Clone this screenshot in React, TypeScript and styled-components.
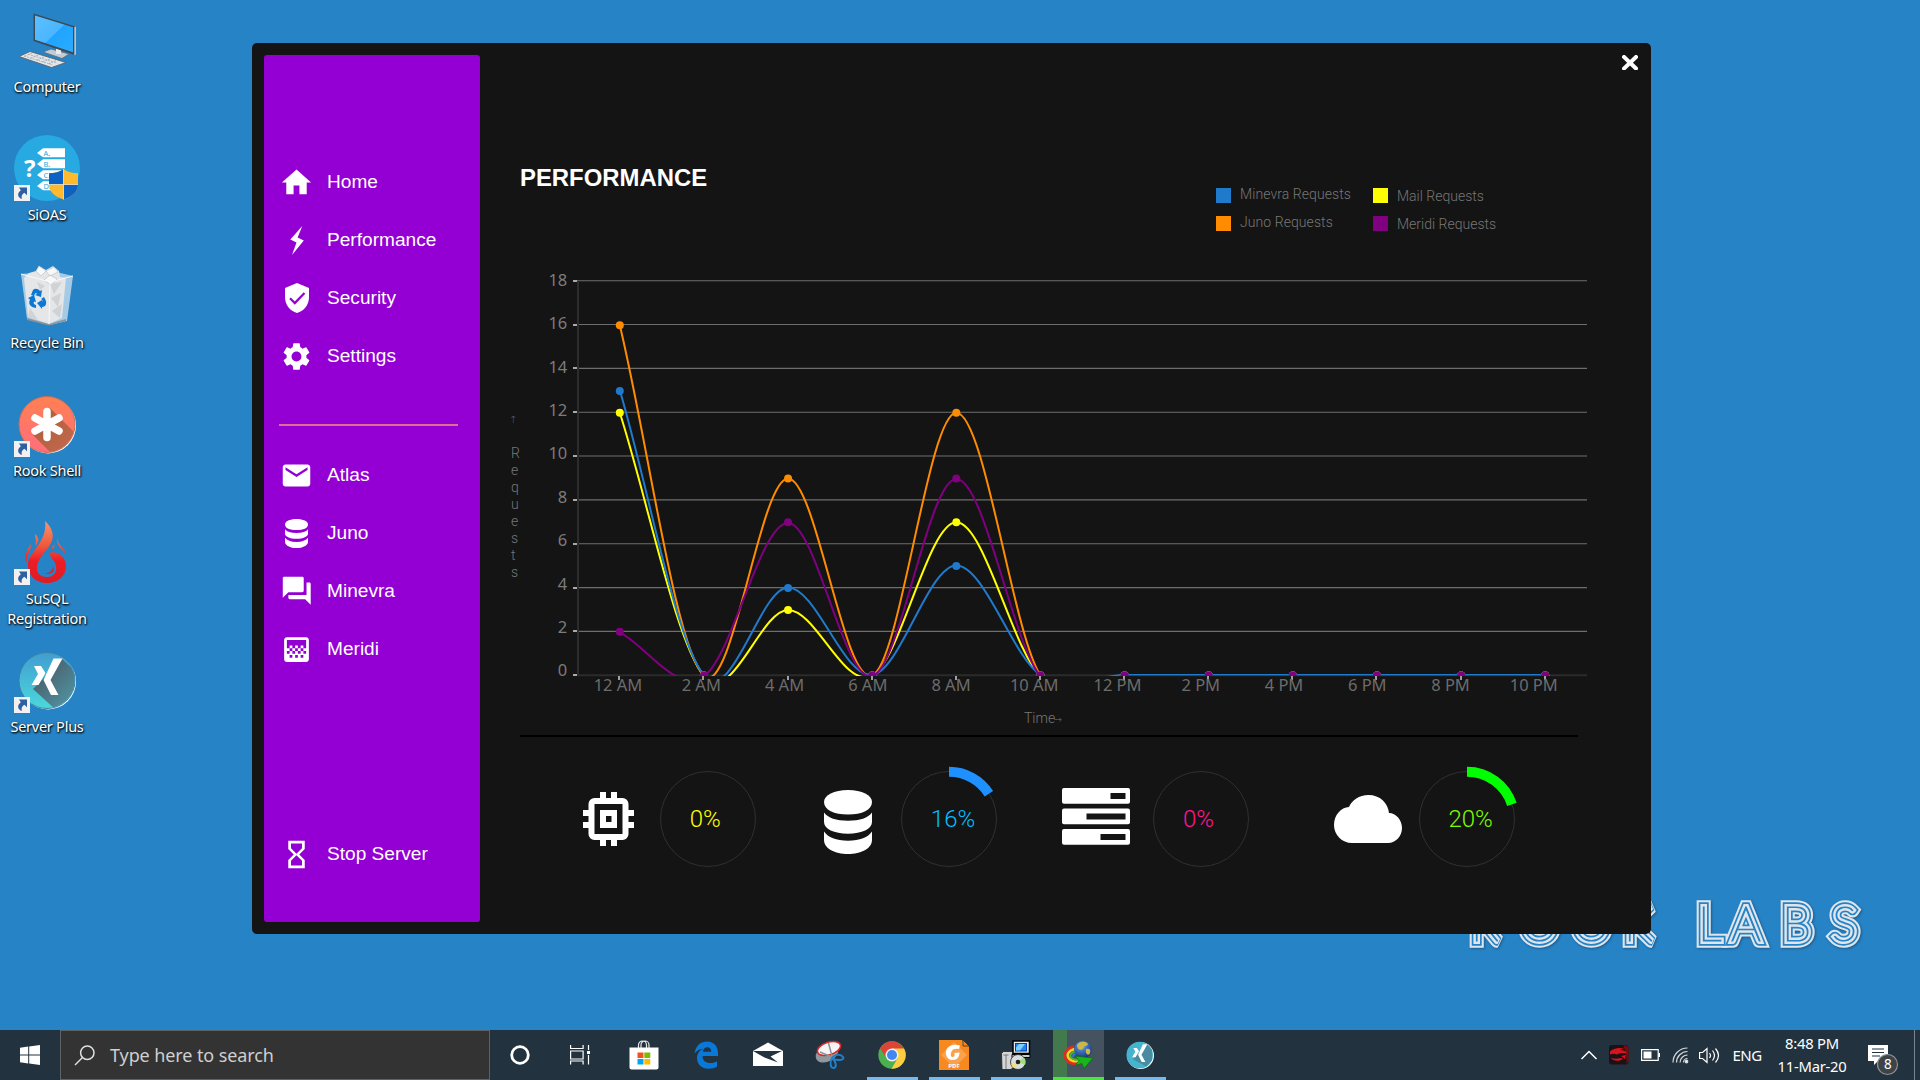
import React from "react";
import styled, { createGlobalStyle } from "styled-components";
import { MdHome, MdSettings, MdEmail, MdForum, MdGradient, MdHourglassEmpty } from "react-icons/md";

const UI = `"Noto Sans", "Open Sans", sans-serif`;
const ARIAL = `"Liberation Sans", Arial, sans-serif`;
const ROBOTO = `Roboto, "Noto Sans", sans-serif`;
const DESKTOP = "#2683c6";

const GlobalStyle = createGlobalStyle`
  * { box-sizing: border-box; }
  html, body { margin: 0; padding: 0; }
  body { background: ${DESKTOP}; overflow: hidden; }
  svg { display: block; flex: none; }
`;

const Desktop = styled.div`
  position: relative;
  display: flex;
  flex-direction: column;
  width: 1920px;
  height: 1080px;
  background: ${DESKTOP};
  overflow: hidden;
  font-family: ${UI};
`;

const Workspace = styled.div`
  flex: 1;
  display: flex;
`;

/* ---------- desktop shortcuts ---------- */

const Shortcuts = styled.div`
  display: flex;
  flex-direction: column;
  width: 94px;
`;

const Shortcut = styled.div`
  height: 128px;
  display: flex;
  flex-direction: column;
  align-items: center;
`;

const ShortcutLabel = styled.span`
  width: 94px;
  margin-top: -1px;
  font-size: 14.5px;
  line-height: 20px;
  letter-spacing: -0.25px;
  text-align: center;
  color: #fff;
  text-shadow: 1px 1px 2px #000, 0 1px 2px rgba(0, 0, 0, 0.7);
`;

const Arrow = () => (
  <g transform="translate(14 57)">
    <rect width="16" height="16" fill="#f1f1f1" />
    <path d="M5 2.5h8v7.7l-2.6-2.4C7.8 9.5 7 11.400 8 14 4.500 13 2 9 6.800 5.200Z" fill="#2f5fa3" />
  </g>
);

const ComputerArt = () => (
  <svg width="94" height="77" viewBox="0 0 94 77">
    <defs>
      <linearGradient id="scr" x1="0" y1="0" x2="1" y2="1">
        <stop offset="0" stopColor="#5cc0ff" />
        <stop offset=".5" stopColor="#4ab6ff" />
        <stop offset=".52" stopColor="#20a4ff" />
        <stop offset="1" stopColor="#2bacff" />
      </linearGradient>
    </defs>
    <path d="M43 52l8-3 18 5-7 4.500Z" fill="#c4ccd3" stroke="#5f6a73" strokeWidth=".8" />
    <path d="M56 48l5 2v4h-5Z" fill="#e8ecef" />
    <path d="M33.500 13.500l42 13-1 28.500-41-14Z" fill="#3c4a55" />
    <path d="M74.300 27l1.700-.4v27.900l-1.700.7Z" fill="#b9c2c9" />
    <path d="M35 15.500l38 11.800v25L35 39.800Z" fill="url(#scr)" />
    <path d="M19 56.500l11-5 36 11-14.500 5Z" fill="#e3e6e9" stroke="#59636b" strokeWidth=".9" />
    <path d="M24 56l29 9M28 54.200l29 8.800M32 53l-8 3.500M38 55l-8 3.500M44 57l-8 3.500M50 58.800l-8 3.500M56 60.600l-8 3.500" stroke="#a4acb3" strokeWidth=".9" strokeDasharray="2 1" />
  </svg>
);

const AnswersArt = () => (
  <svg width="94" height="77" viewBox="0 0 94 77">
    <circle cx="47" cy="40" r="33" fill="#27a9e1" />
    {["A.", "B.", "C.", "D."].map((t, i) => (
      <g key={t} transform={`translate(37 ${20.300 + i * 11})`}>
        <path d="M0 4.700L6 0h22v9H6Z" fill="#fff" />
        <text x="6.500" y="7.600" fontSize="7.500" fontFamily={UI} fill="#27a9e1">{t}</text>
      </g>
    ))}
    <text x="24" y="49" fontSize="24" fontWeight="700" fontFamily={UI} fill="#fff">?</text>
    <path d="M63.500 41c4 3 9 4.300 14.500 4.300V56c0 8-6 12.500-14.500 15.500C55 68.500 49 64 49 56V45.300C54.500 45.300 59.500 44 63.500 41Z" fill="#ffb92e" />
    <path d="M63.500 41v15.500H49V45.300C54.500 45.300 59.500 44 63.500 41ZM63.500 56.500H78C78 64 72 68.500 63.500 71.500Z" fill="#0b62c2" />
    <path d="M63.500 41v30.500M49 56.500h29" stroke="#f7e6bd" strokeWidth=".8" />
    <Arrow />
  </svg>
);

const BinArt = () => (
  <svg width="94" height="77" viewBox="0 0 94 77">
    <path d="M21 18l31-3 21 5-6 45-17 4-23-6Z" fill="#c5dcec" opacity=".8" />
    <path d="M24 22l5-5 7-2 3-5 7 4 7-4 6 5 1 6 6 1-4 40-13 6-21-7Z" fill="#e4e6e8" />
    <path d="M27 62l22 6 17-5v2l-17 4.500L27 64Z" fill="#8d9399" />
    <path d="M36 15l3-5 7 5-5 5ZM46 15l8-4 4 5-8 4ZM44 24l6-5 7 4-6 6Z" fill="#f8f8f8" stroke="#b7bcc0" strokeWidth=".6" />
    <path d="M50 28l12-2-8 12ZM51 42l10-5-3 14ZM52 55l10-7-2 14ZM30 52l8 12-10-3ZM45 30l-8-4 3 8Z" fill="#cfd3d6" />
    <path d="M50 26l-1 42M21 18l29 8 23-6" stroke="#f7fafc" strokeWidth="1" fill="none" />
    <g fill="#0a78d4">
      <path d="M31 39l2-5c2-2 5-1.500 7 1l2-1-1 7-6-2 2-1c-1-2-2-1-3 2Z" />
      <path d="M28 42l6-3 2 7-2-.5c-1 2 0 3 2 3.500v3c-6-1-8-4-6-8.500Z" />
      <path d="M37 47l5-3v2c1-1 0-3-1-3l3-2c4 6 2 10-2 10v2Z" />
    </g>
  </svg>
);

const DiscArt = ({ kind }: { kind: "star" | "x" }) => (
  <svg width="94" height="77" viewBox="0 0 94 77">
    <defs>
      <linearGradient id={`disc-${kind}`} x1="0" y1="0" x2="0" y2="1">
        <stop offset="0" stopColor={kind === "star" ? "#ff8052" : "#419dd0"} />
        <stop offset="1" stopColor={kind === "star" ? "#ff6e7c" : "#4bd8dc"} />
      </linearGradient>
      <linearGradient id={`shade-${kind}`} x1="0" y1="0" x2="1" y2="1">
        <stop offset=".2" stopColor={kind === "star" ? "#b2603f" : "#4b626f"} />
        <stop offset="1" stopColor={kind === "star" ? "#c96c53" : "#52b2c0"} />
      </linearGradient>
      <clipPath id={`clip-${kind}`}><circle cx="47" cy="40.500" r="27.500" /></clipPath>
    </defs>
    <circle cx="48" cy="41.500" r="28" fill="#fff" />
    <circle cx="47" cy="40.500" r="28" fill={`url(#disc-${kind})`} stroke={kind === "star" ? "#ca6d50" : "#3a83a6"} strokeWidth="1" />
    <g clipPath={`url(#clip-${kind})`}>
      {kind === "star" ? (
        <>
          <path d="M50 24l34 34-22 22-29-29 14-10Z" fill="url(#shade-star)" />
          <path d="M47 27.500v26M35 34l24 13M59 34L35 47" stroke="#fff" strokeWidth="7.500" strokeLinecap="round" />
        </>
      ) : (
        <>
          <path d="M61 18l30 28-24 34-34-31 10-10Z" fill="url(#shade-x)" />
          <path d="M53.500 18.500h9L50.500 40l8 15h-7.500L43.500 40ZM34 26h7l4.500 7L38.500 45h-7l6.500-11Z" fill="#fff" />
        </>
      )}
    </g>
    <Arrow />
  </svg>
);

const FlameArt = () => (
  <svg width="94" height="77" viewBox="0 0 94 77">
    <defs>
      <linearGradient id="flame" x1="0" y1="0" x2="0" y2="1">
        <stop offset="0" stopColor="#f8946b" />
        <stop offset=".4" stopColor="#f0583c" />
        <stop offset=".65" stopColor="#ed1c24" />
        <stop offset="1" stopColor="#e01c24" />
      </linearGradient>
    </defs>
    <path
      d="M45 9c7 6 10 15 6 22-4 8-14 15-14 25 0 6 4 9 10 9 7 0 10-5 9-11-1-6-5-7-7-13 8-3 17 4 17 13 0 10-8 17-19 17-12 0-19-8-19-18C28 40 48 30 45 9ZM44 61c5 1 9-2 9-7 3 5-2 10-9 7ZM57 26c1 8 8 9 9 17-3-6-10-8-9-17ZM35 22c4 3 5 8 0 12 2-5 0-7 0-12ZM31 32c0 8-5 10-4 19-3-7 0-14 4-19ZM52 37c0-3 2-3 2-5 1 3 0 5-2 5Z"
      fill="url(#flame)"
    />
    <Arrow />
  </svg>
);

/* ---------- wallpaper wordmark ---------- */

const Wordmark = styled.svg`
  position: absolute;
  left: 1450px;
  top: 880px;
  font-family: Lato, Roboto, sans-serif;
  font-weight: 100;
  font-size: 47px;
  stroke-linejoin: miter;
  stroke-miterlimit: 1.8;
  filter: drop-shadow(1px 1px 1px rgba(20, 50, 80, 0.5));
`;

const WallpaperName = () => (
  <Wordmark width="440" height="90" viewBox="0 0 440 90">
    <defs>
      <text id="rook-labs" y="60.500" x="21 71 123 174 220 248 281 332 382">ROOK LABS</text>
    </defs>
    <use href="#rook-labs" fill="none" stroke="#dfe5ea" strokeWidth="13.500" />
    <use href="#rook-labs" fill="none" stroke={DESKTOP} strokeWidth="9.400" />
    <use href="#rook-labs" fill="none" stroke="#dfe5ea" strokeWidth="6" />
    <use href="#rook-labs" fill={DESKTOP} stroke={DESKTOP} strokeWidth="1.200" />
  </Wordmark>
);

/* ---------- application window ---------- */

const Window = styled.main`
  position: absolute;
  left: 252px;
  top: 43px;
  width: 1399px;
  height: 891px;
  padding: 12px;
  display: flex;
  background: #141414;
  border-radius: 5px;
`;

const Sidebar = styled.nav`
  width: 216px;
  padding: 98px 22px 0 15px;
  display: flex;
  flex-direction: column;
  background: #9400d3;
  border-radius: 3px;
`;

const NavItem = styled.div<{ $gap?: number }>`
  height: 58px;
  margin-top: ${(p) => p.$gap ?? 0}px;
  display: flex;
  align-items: center;
  gap: 12.5px;
  flex: none;
  font: 19.1px/22px ${ARIAL};
  color: #fff;
`;

const NavIcon = styled.span`
  width: 36px;
  height: 36px;
  margin-left: -0.5px;
  display: flex;
  align-items: center;
  justify-content: center;
  color: #fff;
`;

const NavRule = styled.div`
  height: 2px;
  flex: none;
  margin: 39px 0 20px;
  background: #db7093;
`;

const Panel = styled.section`
  flex: 1;
  display: flex;
  flex-direction: column;
`;

const TitleBar = styled.div`
  height: 15px;
  display: flex;
  justify-content: flex-end;
  padding-right: 1px;
`;

const Heading = styled.div`
  height: 190px;
  display: flex;
  padding-left: 40px;
`;

const Title = styled.h1`
  width: 696px;
  margin: 94px 0 0;
  font: bold 23.9px/28px ${ARIAL};
  color: #fff;
`;

const Legend = styled.div`
  margin-top: 118px;
  height: 43px;
  display: grid;
  grid-template-columns: 157px 157px;
  grid-template-rows: 15px 15px;
  row-gap: 13px;
`;

const LegendItem = styled.div<{ $color: string; $drop: number }>`
  display: flex;
  gap: 9px;
  font: 300 14px/15px ${ROBOTO};
  color: #777;
  white-space: nowrap;

  &::before {
    content: "";
    width: 15px;
    height: 15px;
    background: ${(p) => p.$color};
  }

  span {
    margin-top: ${(p) => p.$drop}px;
    height: 15px;
    letter-spacing: ${(p) => (p.$drop < 0 ? 0.07 : 0)}px;
  }
`;

const ChartBox = styled.div`
  height: 475px;
  padding-left: 20px;
`;

const Rule = styled.div`
  width: 1058px;
  height: 2px;
  margin-left: 40px;
  background: #000;
`;

const Gauges = styled.div`
  display: flex;
  align-items: center;
  height: 164px;
  padding-left: 103px;
`;

const Gauge = styled.div<{ $lead: number }>`
  display: flex;
  align-items: center;
  margin-left: ${(p) => p.$lead}px;
`;

const GaugeIcon = styled.div<{ $slot: number; $shift: number }>`
  width: ${(p) => p.$slot}px;
  padding-top: ${(p) => Math.max(0, p.$shift * 2)}px;
  padding-bottom: ${(p) => Math.max(0, -p.$shift * 2)}px;
`;

/* ---------- chart ---------- */

type Pt = { x: number; y: number };
const X0 = 619.8;
const XSTEP = 84.13;
const Y0 = 675.6;
const UNIT = 21.9;

const HOURS = ["12 AM", "2 AM", "4 AM", "6 AM", "8 AM", "10 AM", "12 PM", "2 PM", "4 PM", "6 PM", "8 PM", "10 PM"];
const tail = [0, 0, 0, 0, 0, 0];
const SERIES = [
  { color: "#ffff00", dy: 0, values: [12, 0, 3, 0, 7, 0, ...tail] },
  { color: "#ff8c00", dy: 0, values: [16, 0, 9, 0, 12, 0, ...tail] },
  { color: "#1f7acc", dy: -0.6, values: [13, 0, 4, 0, 5, 0, ...tail] },
  { color: "#800080", dy: 0.6, values: [2, 0, 7, 0, 9, 0, ...tail] },
];

const toPoints = (values: number[], dy: number): Pt[] =>
  values.map((v, i) => ({ x: X0 + i * XSTEP, y: Y0 - v * UNIT + dy }));

/* Catmull-Rom spline; the end points take the slope of their only segment. */
function spline(p: Pt[]) {
  const slope = (i: number) => {
    if (i === 0) return p[1].y - p[0].y;
    if (i === p.length - 1) return p[i].y - p[i - 1].y;
    return (p[i + 1].y - p[i - 1].y) / 2;
  };
  let d = `M${p[0].x} ${p[0].y}`;
  for (let i = 0; i < p.length - 1; i++) {
    const b = p[i];
    const c = p[i + 1];
    const h = (c.x - b.x) / 3;
    d += `C${b.x + h} ${b.y + slope(i) / 3} ${c.x - h} ${c.y - slope(i + 1) / 3} ${c.x} ${c.y}`;
  }
  return d;
}

const Chart = () => (
  <svg width="1100" height="475" viewBox="500 260 1100 475">
    <defs>
      <clipPath id="plot"><rect x="578" y="270" width="1010" height="406" /></clipPath>
    </defs>
    {[18, 16, 14, 12, 10, 8, 6, 4, 2, 0].map((v, i) => {
      const y = 280.7 + i * 43.84;
      return (
        <g key={v}>
          <path d={`M578 ${y}H1587`} stroke={v ? "#6e6e6e" : "#2b2b2b"} strokeWidth={v ? 1.1 : 2} />
          <path d={`M573 ${Math.round(y)}h4.500`} stroke="#d0d0d0" strokeWidth="1.600" />
          <text x="567.300" y={285.7 + i * 43.4} textAnchor="end" fontFamily={UI} fontSize="16.500" fill="#7c7c7c">{v}</text>
        </g>
      );
    })}
    <path d="M578 281V676" stroke="#2c2c2c" strokeWidth="2" />
    <g clipPath="url(#plot)">
      {SERIES.map((s) => (
        <g key={s.color}>
          <path d={spline(toPoints(s.values, s.dy))} fill="none" stroke={s.color} strokeWidth="2" />
          {toPoints(s.values, 0).map((q, i) => <circle key={i} cx={q.x} cy={q.y} r="4" fill={s.color} />)}
        </g>
      ))}
    </g>
    {HOURS.map((h, i) => (
      <g key={h}>
        <path d={`M${Math.round(X0 - 0.5 + i * XSTEP)} 676v4`} stroke="#cfcfcf" strokeWidth="1.500" />
        <text x={618 + i * 83.25} y="691.200" textAnchor="middle" fontFamily={UI} fontSize="16.500" fill="#6c6c6c">{h}</text>
      </g>
    ))}
    <g fontFamily={ROBOTO} fontWeight="300" fontSize="14" fill="#777">
      <text x="509" y="423" fontFamily='"DejaVu Sans"' fontSize="10" fill="#666">↑</text>
      {["R", "e", "q", "u", "e", "s", "t", "s"].map((c, i) => (
        <text key={i} x="511" y={458.400 + i * 17}>{c}</text>
      ))}
      <text x="1024" y="723">Time</text>
      <text x="1053.500" y="722.500" fontFamily='"DejaVu Sans"' fontSize="10" fill="#777">→</text>
    </g>
  </svg>
);

/* ---------- glyphs ---------- */

const Bolt = () => (
  <svg width="14" height="29" viewBox="0 0 14 29"><path d="M12.300 0L.3 13.500l6.200 3L2 29l11.800-14.500-6.200-3Z" fill="#fff" /></svg>
);

const Shield = () => (
  <svg width="24" height="30" viewBox="0 0 24 30">
    <path d="M12 0l12 5v9c0 8-5 14-12 16C5 28 0 22 0 14V5Z" fill="#fff" />
    <path d="M5 15.300l4.800 4.800L19.500 10" fill="none" stroke="#9400d3" strokeWidth="2.200" />
  </svg>
);

const Cylinder = ({ w, h }: { w: number; h: number }) => (
  <svg width={w} height={h} viewBox="0 0 48 64" preserveAspectRatio="none" fill="#fff">
    <path d="M0 12C0 5 10 0 24 0s24 5 24 12c0 8-10 12.500-24 12.500S0 20 0 12Z" />
    <path d="M0 22.500c4 5.500 12 8.200 24 8.200s20-2.700 24-8.200V32c0 7-10 11.700-24 11.700S0 39 0 32Z" />
    <path d="M0 41.500c4 6 12 9.200 24 9.200s20-3.200 24-9.200V50c0 8.500-11 14-24 14S0 58.500 0 50Z" />
  </svg>
);

const Chip = () => (
  <svg width="51" height="54" viewBox="0 0 51 54" fill="#fff">
    <path d="M17 0h6v7h-6ZM28 0h6v7h-6ZM17 47h6v7h-6ZM28 47h6v7h-6ZM0 18h7v6H0ZM0 30h7v6H0ZM44 18h7v6h-7ZM44 30h7v6h-7Z" />
    <path fillRule="evenodd" d="M11.500 6h28a6 6 0 0 1 6 6v30a6 6 0 0 1-6 6h-28a6 6 0 0 1-6-6V12a6 6 0 0 1 6-6ZM11.500 12v30h28V12Z" />
    <path fillRule="evenodd" d="M17 18h17v18H17ZM23 24v6h5.500v-6Z" />
  </svg>
);

const Racks = () => (
  <svg width="68" height="57" viewBox="0 0 68 57">
    {[15, 39, 25].map((w, i) => (
      <g key={w} transform={`translate(0 ${i * 20.500})`}>
        <rect width="68" height="15.800" rx="2" fill="#fff" />
        <rect x={63.500 - w} y="5" width={w} height="6" fill="#141414" />
      </g>
    ))}
  </svg>
);

const Cloud = () => (
  <svg width="68" height="48" viewBox="0 0 68 48" fill="#fff">
    <path d="M18 48C8 48 0 40 0 30c0-10 7-17.500 15-18C18 5 25 0 34.500 0 46 0 54 8 55 18c7 0 13 7 13 15 0 8-6 15-14 15Z" />
  </svg>
);

const Ring = ({ pct, arc, color, dx }: { pct: number; arc?: string; color: string; dx: number }) => {
  const a = (pct / 100) * Math.PI * 2;
  const r = 47.2;
  return (
    <svg width="106" height="106" viewBox="-53 -53 106 106">
      <circle r="47.500" fill="none" stroke="#303030" />
      {arc && <path d={`M0 ${-r}A${r} ${r} 0 0 1 ${r * Math.sin(a)} ${-r * Math.cos(a)}`} fill="none" stroke={arc} strokeWidth="10" />}
      <text x={dx} y="7.800" textAnchor="middle" fontFamily={ROBOTO} fontWeight="300" fontSize="24" fill={color}>{pct}%</text>
    </svg>
  );
};

/* ---------- taskbar ---------- */

const Taskbar = styled.footer`
  height: 50px;
  flex: none;
  display: flex;
  background: #22323f;
  color: #fff;
`;

const StartButton = styled.div`
  width: 60px;
  display: flex;
  align-items: center;
  justify-content: center;
  padding-right: 1px;
`;

const Search = styled.div`
  width: 430px;
  display: flex;
  align-items: center;
  gap: 15px;
  padding-left: 13px;
  background: #333;
  border: 1px solid #5c6266;
  font-size: 18px;
  letter-spacing: -0.1px;
  color: #cfcfcf;
`;

const TaskSlot = styled.div<{ $line?: string; $active?: boolean }>`
  width: 51px;
  margin: 0 6px 0 5px;
  padding-right: 1px;
  display: flex;
  align-items: center;
  justify-content: center;
  border-bottom: 3px solid transparent;
  border-top: 3px solid transparent;
  background: ${(p) => (p.$active ? "linear-gradient(90deg, #427a4d 14px, #45525f 14px) border-box" : "none")};
  border-bottom-color: ${(p) => p.$line ?? "transparent"};
`;

const Tray = styled.div`
  margin-left: auto;
  display: flex;
  align-items: center;
  font-size: 15px;
`;

const TrayItem = styled.div<{ $w: number; $top?: number }>`
  width: ${(p) => p.$w}px;
  padding-top: ${(p) => p.$top ?? 0}px;
  display: flex;
  justify-content: center;
  letter-spacing: -0.5px;
`;

const Clock = styled.div`
  width: 84px;
  display: flex;
  flex-direction: column;
  align-items: center;
  line-height: 23px;
  font-size: 14.800px;
  letter-spacing: -0.25px;
`;

const ShowDesktop = styled.div`
  width: 6px;
  height: 50px;
  border-left: 1px solid #7b858d;
`;

const line = "#76b9ed";

const taskIcons: { key: string; line?: string; active?: boolean; art: React.ReactNode }[] = [
  {
    key: "cortana",
    art: <svg width="22" height="22" viewBox="0 0 22 22"><circle cx="11" cy="11" r="8.300" fill="none" stroke="#fff" strokeWidth="2.800" /></svg>,
  },
  {
    key: "taskview",
    art: (
      <svg width="24" height="20" viewBox="2 0 24 20" fill="none" stroke="#fff" strokeWidth="1.200">
        <path d="M2.600 0v3.500h12.500V0M2.600 19.500V16h12.500v3.500M2.600 6h12.500v8H2.600ZM20.500 0v5M20.500 10v9.500" />
        <rect x="19" y="6" width="3" height="3" fill="#fff" stroke="none" />
      </svg>
    ),
  },
  {
    key: "store",
    art: (
      <svg width="30" height="30" viewBox="0 0 30 30">
        <path d="M9.500 8V5a4 4 0 0 1 8 0v3M12 8V5a4 4 0 0 1 8 0v3" fill="none" stroke="#e8e8e8" strokeWidth="1.200" />
        <path d="M.5 7.500h29v20a2 2 0 0 1-2 2h-25a2 2 0 0 1-2-2Z" fill="#fff" />
        <path d="M8.500 12.500h6v5.500h-6Z" fill="#f25022" /><path d="M15.300 12.500h6v5.500h-6Z" fill="#7fba00" />
        <path d="M8.500 19h6v5.500h-6Z" fill="#00a4ef" /><path d="M15.300 19h6v5.500h-6Z" fill="#ffb900" />
      </svg>
    ),
  },
  {
    key: "edge",
    art: (
      <svg width="25" height="28" viewBox="0 0 25 28">
        <path d="M.5 12.500C2 4 7 .5 13 .5c7 0 11 5 11 11.500V15H8.500c.3 5 3.500 7 7.500 7 3 0 5.300-.8 7-1.800v5.600c-2 1.200-5 1.900-8.500 1.900C7.500 27.700 3 23 3 17.200c0-4.400 2.500-7.700 6-9.400C5.500 8.200 2.500 9.800.5 12.500ZM8.800 10.800h8.500C17.300 8 15.700 6.300 13.300 6.300c-2.300 0-4 1.700-4.500 4.500Z" fill="#0a78d7" />
      </svg>
    ),
  },
  {
    key: "mail",
    art: (
      <svg width="30" height="26" viewBox="0 0 30 26">
        <path d="M0 9L15 .5 30 9v15H0Z" fill="#fff" />
        <path d="M0 9h29L17.500 14.500l7.500 6L11.500 15.500Z" fill="#22323f" />
      </svg>
    ),
  },
  {
    key: "snip",
    art: (
      <svg width="30" height="30" viewBox="0 0 30 30">
        <ellipse cx="12" cy="13.500" rx="12" ry="8" transform="rotate(-28 12 13.500)" fill="#8f989f" />
        <ellipse cx="14" cy="8.500" rx="12" ry="6.300" transform="rotate(-18 14 8.500)" fill="#f5f5f5" stroke="#d8282f" strokeWidth="1.500" />
        <path d="M13.500 3l4 15M5 12l14 6" stroke="#8b9298" strokeWidth="1.500" />
        <path d="M17 18c3-4 9-4 11-1s-4 4-10 2c3 3 4 8 1 9s-5-5-2-10" fill="none" stroke="#1f7fc9" strokeWidth="2" />
      </svg>
    ),
  },
  {
    key: "chrome",
    line,
    art: (
      <svg width="28" height="28" viewBox="-14 -14 28 28">
        <circle r="13.700" fill="#4caf50" />
        <path d="M0 0L-11.860-6.850A13.700 13.700 0 0 1 11.860-6.850Z" fill="#db4437" />
        <path d="M-11.860-6.850L-5.500 3.200 0-6.600H12Z" fill="#db4437" />
        <path d="M0-6.500H12A13.700 13.700 0 0 1-.5 13.700L5.600 3.200Z" fill="#ffcd40" />
        <circle r="6.500" fill="#f1f1f1" /><circle r="5" fill="#4285f4" />
      </svg>
    ),
  },
  {
    key: "pdf",
    line,
    art: (
      <svg width="30" height="30" viewBox="0 0 30 30">
        <path d="M0 0h23l7 6.500V30H0Z" fill="#f7891f" />
        <path d="M24 0l6 6h-6Z" fill="#f7891f" stroke="#22323f" strokeWidth=".8" />
        <path d="M15 2l13 13-13 13L2 15Z" fill="#f9a24d" />
        <path d="M21 5.500C12 3 6 8 7 14c.5 4 3.500 6 7 6 4.500 0 6.500-3.500 6.500-7.500l-5 .5c.5 3-.5 4-2 4-2 0-2-3-1-5.500C13.500 9 17 8.500 20 9Z" fill="#fff" />
        <text x="15" y="27.800" textAnchor="middle" fontSize="6" fontWeight="700" fontFamily={UI} fill="#fff">PDF</text>
      </svg>
    ),
  },
  {
    key: "installer",
    line,
    art: (
      <svg width="30" height="30" viewBox="0 0 30 30">
        <path d="M.5 13.500l2-2H12v16l-2 2H1Z" fill="#d5d5d5" stroke="#222" strokeWidth=".8" />
        <path d="M2.500 15h5M5 15v14" stroke="#777" />
        <path d="M12 1h16.500v12.500H12Z" fill="#e9e9e9" stroke="#000" strokeWidth="1.500" />
        <path d="M14 3h12v8.500H14Z" fill="#0a3fae" /><path d="M15 4h10v6.500H15Z" fill="#1d86f0" /><path d="M18 4h6l-5 6.500h-4v-3Z" fill="#7ccfff" />
        <path d="M11 14.500h18v3H11Z" fill="#c9c9c9" stroke="#000" strokeWidth="1" />
        <circle cx="17" cy="22" r="7.500" fill="#d7dde0" stroke="#222" strokeWidth=".8" />
        <path d="M17 22l6-4.500A7.500 7.500 0 0 1 24 25Z" fill="#9fe07a" /><path d="M17 22l-3 6.500a7 7 0 0 1-4-4Z" fill="#f2e276" />
        <circle cx="17" cy="22" r="2.300" fill="#222" />
      </svg>
    ),
  },
  {
    key: "downloads",
    line: "#4fe340",
    active: true,
    art: (
      <svg width="30" height="30" viewBox="0 0 30 30">
        <defs>
          <radialGradient id="globe" cx=".4" cy=".3" r=".75">
            <stop offset="0" stopColor="#cfe0f5" /><stop offset=".35" stopColor="#4678c8" /><stop offset="1" stopColor="#14306f" />
          </radialGradient>
        </defs>
        <path d="M11 6.500C4 8 0 13 2.500 18c2.500 5 8 6.500 15 5" fill="none" stroke="#e02c20" strokeWidth="2.800" />
        <path d="M11.500 9C6 10.500 3.500 14 5.300 17.500 7.500 21 12 22 17 21" fill="none" stroke="#f6d21e" strokeWidth="2.400" />
        <path d="M12 11.500c-4 1.500-5.500 3.500-4.300 5.500 1.500 2.300 5 3 9.300 2.500" fill="none" stroke="#3fb830" strokeWidth="2" />
        <path d="M13 13.500c-3 1-3.500 2.500-2.500 3.500" fill="none" stroke="#2c7ae0" strokeWidth="1.800" />
        <circle cx="20" cy="9.500" r="8.800" fill="url(#globe)" />
        <path d="M14 5c3-4 9-4 11-1-1 3-4 1-5 4s-6 2-6-3ZM23 9c4-1 5 1 4 4s-5 2-4-4Z" fill="#c9b945" />
        <path d="M12 16l18 2-9 10.500-2-5-7 2 4-5Z" fill="#19b51d" stroke="#0c6a12" strokeWidth=".7" />
      </svg>
    ),
  },
  {
    key: "server",
    line,
    art: (
      <svg width="28" height="28" viewBox="19 12 57 57">
        <circle cx="48.500" cy="41.500" r="27.500" fill="#fff" />
        <circle cx="47" cy="40.500" r="27" fill="#45b4cf" />
        <path d="M61 18l11 13v20L60 64 33 49l10-10Z" fill="#4a8c9f" />
        <path d="M53.500 18.500h9L50.500 40l8 15h-7.500L43.500 40ZM34 26h7l4.500 7L38.500 45h-7l6.500-11Z" fill="#fff" />
      </svg>
    ),
  },
];

const nav = [
  { label: "Home", icon: <MdHome size={35} /> },
  { label: "Performance", icon: <Bolt /> },
  { label: "Security", icon: <Shield /> },
  { label: "Settings", icon: <MdSettings size={33} /> },
];

const services = [
  { label: "Atlas", icon: <MdEmail size={33} /> },
  { label: "Juno", icon: <Cylinder w={23} h={29} /> },
  { label: "Minevra", icon: <MdForum size={33.5} /> },
  { label: "Meridi", icon: <MdGradient size={33} /> },
];

export default function App() {
  return (
    <Desktop>
      <GlobalStyle />
      <Workspace>
        <Shortcuts>
          <Shortcut><ComputerArt /><ShortcutLabel>Computer</ShortcutLabel></Shortcut>
          <Shortcut><AnswersArt /><ShortcutLabel>SiOAS</ShortcutLabel></Shortcut>
          <Shortcut><BinArt /><ShortcutLabel>Recycle Bin</ShortcutLabel></Shortcut>
          <Shortcut><DiscArt kind="star" /><ShortcutLabel>Rook Shell</ShortcutLabel></Shortcut>
          <Shortcut><FlameArt /><ShortcutLabel>SuSQL Registration</ShortcutLabel></Shortcut>
          <Shortcut><DiscArt kind="x" /><ShortcutLabel>Server Plus</ShortcutLabel></Shortcut>
        </Shortcuts>
      </Workspace>
      <WallpaperName />

      <Window>
        <Sidebar>
          {nav.map((n) => <NavItem key={n.label}><NavIcon>{n.icon}</NavIcon>{n.label}</NavItem>)}
          <NavRule />
          {services.map((n) => <NavItem key={n.label}><NavIcon>{n.icon}</NavIcon>{n.label}</NavItem>)}
          <NavItem $gap={147}><NavIcon><MdHourglassEmpty size={33} /></NavIcon>Stop Server</NavItem>
        </Sidebar>
        <Panel>
          <TitleBar>
            <svg width="16" height="15" viewBox="0 0 16 15"><path d="M2 2l12 11.500M14 2L2 13.500" stroke="#fff" strokeWidth="4" strokeLinecap="square" /></svg>
          </TitleBar>
          <Heading>
            <Title>PERFORMANCE</Title>
            <Legend>
              <LegendItem $color="#1f7acc" $drop={-1}><span>Minevra Requests</span></LegendItem>
              <LegendItem $color="#ffff00" $drop={1}><span>Mail Requests</span></LegendItem>
              <LegendItem $color="#ff8c00" $drop={-1}><span>Juno Requests</span></LegendItem>
              <LegendItem $color="#800080" $drop={1}><span>Meridi Requests</span></LegendItem>
            </Legend>
          </Heading>
          <ChartBox><Chart /></ChartBox>
          <Rule />
          <Gauges>
            <Gauge $lead={0}><GaugeIcon $slot={72} $shift={0}><Chip /></GaugeIcon><Ring pct={0} color="#ffff00" dx={-2.7} /></Gauge>
            <Gauge $lead={63}><GaugeIcon $slot={72} $shift={3}><Cylinder w={48} h={64} /></GaugeIcon><Ring pct={16} arc="#1e90ff" color="#00bfff" dx={4} /></Gauge>
            <Gauge $lead={60.4}><GaugeIcon $slot={85.6} $shift={-2.5}><Racks /></GaugeIcon><Ring pct={0} color="#ff1493" dx={-2.5} /></Gauge>
            <Gauge $lead={80.4}><GaugeIcon $slot={79.6} $shift={0}><Cloud /></GaugeIcon><Ring pct={20} arc="#00ff00" color="#7cfc00" dx={3.6} /></Gauge>
          </Gauges>
        </Panel>
      </Window>

      <Taskbar>
        <StartButton>
          <svg width="20" height="20" viewBox="0 0 20 20" fill="#fff"><path d="M0 2.800L8.200 1.600V9.500H0ZM9.200 1.400L20 0v9.500H9.200ZM0 10.500h8.200v7.900L0 17.200ZM9.200 10.500H20V20L9.200 18.600Z" /></svg>
        </StartButton>
        <Search>
          <svg width="21" height="21" viewBox="0 0 21 21" fill="none" stroke="#e0e0e0" strokeWidth="1.500"><circle cx="13.300" cy="7.700" r="6.700" /><path d="M8.500 12.500L1 20" /></svg>
          Type here to search
        </Search>
        {taskIcons.map((t) => <TaskSlot key={t.key} $line={t.line} $active={t.active}>{t.art}</TaskSlot>)}
        <Tray>
          <TrayItem $w={30}>
            <svg width="18" height="10" viewBox="0 0 18 10"><path d="M1.500 9L9 1.500 16.500 9" fill="none" stroke="#fff" strokeWidth="1.500" /></svg>
          </TrayItem>
          <TrayItem $w={30}>
            <svg width="20" height="20" viewBox="0 0 20 20"><rect width="19.500" height="19.500" rx="3" fill="#1c1216" /><path d="M14 .5h3a3 3 0 0 1 2.500 3V16l-2 3.500c.5-6-.5-14-3.500-19Z" fill="#7c0812" /><path d="M1 6.500c3-3 9-4.500 14-3l-4 1.500c4 0 6 1.500 7 3.500-4-1-8-.5-10 1-2-1-5-1-7 0ZM2 13c2 3 8 4 12 1l-2-1c-4 1-7 1-10 0ZM12 11l5-1-1 4Z" fill="#d8141c" /></svg>
          </TrayItem>
          <TrayItem $w={32}>
            <svg width="19" height="12" viewBox="0 0 19 12"><path d="M.6 .6h16.600v10.800H.6Z" fill="none" stroke="#fff" strokeWidth="1.200" /><path d="M2.500 2.500h8v7h-8ZM17.500 4h1.500v4h-1.500Z" fill="#fff" /></svg>
          </TrayItem>
          <TrayItem $w={29}>
            <svg width="17" height="17" viewBox="0 0 17 17" fill="none" stroke="#d5dade" strokeWidth="1.200"><path d="M1 15.500C1 7.500 7.500 1 15.500 1M4.500 15.500c0-6 5-11 11-11M8 15.500C8 11.500 11.500 8 15.500 8M11.500 15.500a4 4 0 0 1 4-4" /><circle cx="14.500" cy="14.500" r="1.300" fill="#fff" /></svg>
          </TrayItem>
          <TrayItem $w={29}>
            <svg width="21" height="17" viewBox="0 0 21 17" fill="none" stroke="#fff" strokeWidth="1.200"><path d="M.6 5.500h3L8 1.500v14l-4.400-4h-3ZM10.500 6q2 2.500 0 5M13.500 3.500q4 5 0 10M16.500 1.500q6 7 0 14" /></svg>
          </TrayItem>
          <TrayItem $w={46}>ENG</TrayItem>
          <Clock><span>8:48 PM</span><span>11-Mar-20</span></Clock>
          <TrayItem $w={60} $top={10}>
            <svg width="32" height="34" viewBox="1 0 32 34">
              <path d="M1 2h20v16H11l-4 4v-4H1Z" fill="#fff" />
              <path d="M5 6h12M5 9.500h12M5 13h8" stroke="#22323f" strokeWidth="1.200" />
              <circle cx="20.500" cy="21.500" r="10" fill="#3e4348" stroke="#8c9297" strokeWidth="1.200" />
              <text x="20.500" y="26.300" textAnchor="middle" fontSize="13.500" fontFamily={UI} fill="#fff">8</text>
            </svg>
          </TrayItem>
          <ShowDesktop />
        </Tray>
      </Taskbar>
    </Desktop>
  );
}
